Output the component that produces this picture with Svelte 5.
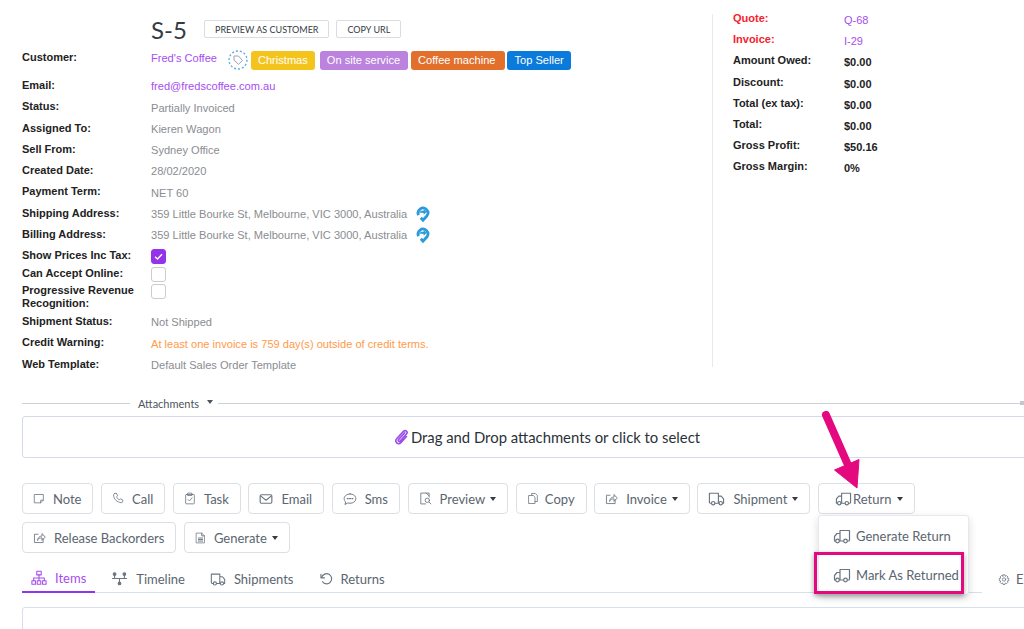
<script>
  const fields = [
    { label: 'Email:', value: 'fred@fredscoffee.com.au', kind: 'link' },
    { label: 'Status:', value: 'Partially Invoiced' },
    { label: 'Assigned To:', value: 'Kieren Wagon' },
    { label: 'Sell From:', value: 'Sydney Office' },
    { label: 'Created Date:', value: '28/02/2020' },
    { label: 'Payment Term:', value: 'NET 60' },
    { label: 'Shipping Address:', value: '359 Little Bourke St, Melbourne, VIC 3000, Australia', map: true },
    { label: 'Billing Address:', value: '359 Little Bourke St, Melbourne, VIC 3000, Australia', map: true }
  ];
  const lower = [
    { label: 'Shipment Status:', value: 'Not Shipped' },
    { label: 'Credit Warning:', value: 'At least one invoice is 759 day(s) outside of credit terms.', kind: 'warn' },
    { label: 'Web Template:', value: 'Default Sales Order Template' }
  ];
  const totals = [
    { label: 'Quote:', value: 'Q-68', kind: 'ref' },
    { label: 'Invoice:', value: 'I-29', kind: 'ref' },
    { label: 'Amount Owed:', value: '$0.00' },
    { label: 'Discount:', value: '$0.00' },
    { label: 'Total (ex tax):', value: '$0.00' },
    { label: 'Total:', value: '$0.00' },
    { label: 'Gross Profit:', value: '$50.16' },
    { label: 'Gross Margin:', value: '0%' }
  ];
  const tags = [
    { name: 'Christmas', color: '#f5c41c' },
    { name: 'On site service', color: '#bb82de' },
    { name: 'Coffee machine', color: '#e36f2d' },
    { name: 'Top Seller', color: '#0b7bdb' }
  ];
  const row1 = [
    { name: 'Note', icon: 'note' },
    { name: 'Call', icon: 'call' },
    { name: 'Task', icon: 'task' },
    { name: 'Email', icon: 'mail' },
    { name: 'Sms', icon: 'sms' },
    { name: 'Preview', icon: 'preview', caret: true },
    { name: 'Copy', icon: 'copy' },
    { name: 'Invoice', icon: 'share', caret: true },
    { name: 'Shipment', icon: 'truck', caret: true }
  ];
  const row2 = [
    { name: 'Release Backorders', icon: 'share' },
    { name: 'Generate', icon: 'doc', caret: true }
  ];
  const tabs = [
    { name: 'Items', icon: 'tree', active: true },
    { name: 'Timeline', icon: 'timeline' },
    { name: 'Shipments', icon: 'truck' },
    { name: 'Returns', icon: 'undo' }
  ];
</script>

{#snippet icon(name)}
  <svg class="ico {name}" viewBox="0 0 18 18" fill="none" stroke="currentColor" stroke-width="1.2" stroke-linejoin="round" stroke-linecap="round">
    {#if name === 'note'}
      <path d="M2.500 3h13v8.500L11.500 15.500H2.500z" /><path d="M15.500 11.500h-4v4" />
    {:else if name === 'call'}
      <path d="M4 1.500l2.500-.5 2 3.800-1.600 1.400c.7 2.300 2.200 4 4.200 4.800l1.400-1.600 3.800 2-.5 2.800c-.2.800-1 1.300-1.800 1.100C7.600 14.600 2.700 10.300 2.300 3.800c-.1-.8.900-2.100 1.700-2.300z" />
    {:else if name === 'task'}
      <rect x="2.500" y="3" width="13" height="14" rx="1" /><rect x="6" y="1" width="6" height="3.500" /><path d="M6 10.500l2.200 2.200L12 8" />
    {:else if name === 'mail'}
      <rect x="1.500" y="3.500" width="15" height="11" rx="1.500" stroke-width="1.500" /><path d="M2 5l7 5.500L16 5" stroke-width="1.500" />
    {:else if name === 'sms'}
      <path d="M9 2.500c4.200 0 7.500 2.600 7.500 6S13.200 14.500 9 14.500c-1 0-2-.2-2.800-.4L2.500 16l1-3.200C2.200 11.700 1.500 10.200 1.500 8.500c0-3.400 3.300-6 7.500-6z" /><path d="M5.500 8.500h1.200M8.500 8.500h1.200M11.500 8.500h1.200" stroke-width="1.600" />
    {:else if name === 'preview'}
      <path d="M14 7V1.500H2.500v15H9" /><path d="M10 1.500L14 5.500" /><circle cx="11.500" cy="11.500" r="3" /><path d="M14 14l2.500 2.500" />
    {:else if name === 'copy'}
      <path d="M7 4V1.500h5.500l3 3V13.500h-3.500" /><path d="M3 4.500h6.500l2.500 2.500v9.500H3z" />
    {:else if name === 'share'}
      <path d="M14 10.500V16H2V4.500h5" /><path d="M6.500 12.500c.3-3.500 2.500-5.500 6-5.500V3.500l4.500 5-4.500 4.500v-3.500c-2.600 0-4.500.8-6 2.500z" />
    {:else if name === 'truck'}
      <path d="M3.600 14H2.500a1 1 0 0 1-1-1V3.500h9.500V14H7.400M11 6.500h3l2.500 3V14h-.9M11 14h.6" /><circle cx="5.500" cy="14" r="1.800" /><circle cx="13.500" cy="14" r="1.800" />
    {:else if name === 'back'}
      <path d="M14.400 14h1.100a1 1 0 0 0 1-1V3.500H7V14h3.600M7 6.500H4l-2.500 3V14h.9M7 14h-.6" /><circle cx="12.500" cy="14" r="1.800" /><circle cx="4.500" cy="14" r="1.800" />
    {:else if name === 'doc'}
      <path d="M2.500 1h8.500l4.500 4.500V17h-13z" /><path d="M11 1v4.500h4.500M5.500 9h7M5.500 11.500h7M5.500 14h7" stroke-width="1.500" />
    {:else if name === 'tree'}
      <rect x="6.500" y="1.500" width="5" height="4" /><rect x="1" y="12" width="4" height="4" /><rect x="7" y="12" width="4" height="4" /><rect x="13" y="12" width="4" height="4" /><path d="M9 5.500V12M3 12V9h12v3" />
    {:else if name === 'timeline'}
      <circle cx="3.500" cy="3.500" r="1.500" fill="currentColor" /><circle cx="14.500" cy="3.500" r="1.500" fill="currentColor" /><circle cx="9" cy="14" r="1.500" fill="currentColor" /><path d="M1 8.500h16M3.500 5v3.500M14.500 5v3.500M9 8.500V12" />
    {:else if name === 'undo'}
      <path d="M3.500 7a6.500 6.500 0 1 1 1 5.500" stroke-width="1.500" /><path d="M2.500 3v4.500H7" stroke-width="1.500" />
    {:else if name === 'gear'}
      <circle cx="9" cy="9" r="2.500" /><path d="M7.500 2h3l.5 2.200 1.900-1 2.100 2.100-1 1.900 2.200.5v3l-2.200.5 1 1.900-2.100 2.100-1.900-1-.5 2.200h-3l-.5-2.200-1.900 1-2.100-2.100 1-1.900L2 10.500v-3l2.200-.5-1-1.900 2.100-2.100 1.900 1z" />
    {/if}
  </svg>
{/snippet}

{#snippet mapPin()}
  <svg class="pin" viewBox="0 0 14 17" fill="none">
    <path d="M2.600 9.200A4.900 4.900 0 1 1 11 9.800L7 14.200 4.800 11.800" stroke="#2a9bd8" stroke-width="2.800" />
    <path d="M3 6.800C4 4.800 5.800 4.400 7.600 4.800V3l3 3-3 2.700V7c-1.700-.5-3.300-.4-4.600-.2z" fill="#2a9bd8" />
  </svg>
{/snippet}

{#snippet toolButton(item)}
  <button class="tool">
    {@render icon(item.icon)}
    <span>{item.name}</span>
    {#if item.caret}<i class="caret"></i>{/if}
  </button>
{/snippet}

<div class="page">
  <section class="top">
    <div class="details">
      <div class="title">
        <h1>S-5</h1>
        <button class="mini">PREVIEW AS CUSTOMER</button>
        <button class="mini">COPY URL</button>
      </div>

      <div class="row customer">
        <div class="lbl">Customer:</div>
        <div class="val link">Fred's Coffee</div>
        <div class="tag-btn">
          <svg viewBox="0 0 20 20" fill="none">
            <circle cx="10" cy="10" r="9" stroke="#5aa9e6" stroke-width="1.300" stroke-dasharray="2 2" />
            <path d="M6 6h4.500l4 4.500-4 3.800L6 10.200z" stroke="#98a3ad" />
          </svg>
        </div>
        <div class="tags">
          {#each tags as tag}
            <span class="tag" style="background:{tag.color}">{tag.name}</span>
          {/each}
        </div>
      </div>

      {#each fields as f}
        <div class="row">
          <div class="lbl">{f.label}</div>
          <div class="val {f.kind ?? ''}">{f.value}</div>
          {#if f.map}{@render mapPin()}{/if}
        </div>
      {/each}

      <div class="row checks first">
        <div class="lbl">Show Prices Inc Tax:</div>
        <div class="box on">
          <svg viewBox="0 0 15 15"><path d="M4 7.800l2.500 2.200L11 5.200" fill="none" stroke="#fff" stroke-width="1.400" /></svg>
        </div>
      </div>
      <div class="row checks">
        <div class="lbl">Can Accept Online:</div>
        <div class="box"></div>
      </div>
      <div class="row checks tall">
        <div class="lbl">Progressive Revenue Recognition:</div>
        <div class="box"></div>
      </div>

      {#each lower as f}
        <div class="row">
          <div class="lbl">{f.label}</div>
          <div class="val {f.kind ?? ''}">{f.value}</div>
        </div>
      {/each}
    </div>

    <aside class="side">
      {#each totals as t}
        <div class="row">
          <div class="lbl {t.kind ?? ''}">{t.label}</div>
          <div class="amt {t.kind ?? ''}">{t.value}</div>
        </div>
      {/each}
    </aside>
  </section>

  <div class="divider">
    <span class="rule short"></span>
    <span class="att">Attachments</span>
    <i class="caret small"></i>
    <span class="rule"></span>
    <span class="knob"></span>
  </div>

  <div class="drop">
    <svg class="clip" viewBox="0 0 16 18" fill="none" stroke="#9b4dea" stroke-width="1.700" stroke-linecap="round">
      <path d="M11.500 4L5 11c-1.200 1.400.2 2.900 1.500 1.800l6.800-7.500c2-2.300-1-5-3.200-2.800L3 10c-3 3.200 1.300 7.800 4.300 4.500l6-6.500" />
    </svg>
    <span>Drag and Drop attachments or click to select</span>
  </div>

  <div class="toolbar">
    {#each row1 as item}
      {@render toolButton(item)}
    {/each}
    <div class="return-wrap">
      <button class="tool return">
        {@render icon('back')}<span>Return</span><i class="caret"></i>
      </button>
      <div class="menu">
        <div class="menu-item">{@render icon('back')}<span>Generate Return</span></div>
        <div class="menu-item">{@render icon('back')}<span>Mark As Returned</span></div>
        <div class="highlight"></div>
      </div>
      <svg class="arrow" viewBox="0 0 50 90">
        <path d="M8 4L30 54" stroke="#e5097f" stroke-width="8" stroke-linecap="round" fill="none" />
        <path d="M39 77L16.500 59 41 48.500z" fill="#e5097f" stroke="#e5097f" stroke-linejoin="round" />
      </svg>
    </div>
    {#each row2 as item}
      {@render toolButton(item)}
    {/each}
  </div>

  <nav class="tabs">
    {#each tabs as tab}
      <div class="tab" class:active={tab.active}>
        {@render icon(tab.icon)}
        <span>{tab.name}</span>
      </div>
    {/each}
    <div class="extra">{@render icon('gear')}<span>E</span></div>
  </nav>

  <div class="panel"></div>
</div>

<style>
  :global(body) {
    margin: 0;
    background: #fff;
    overflow: hidden;
  }
  button {
    font: inherit;
    background: #fff;
    cursor: pointer;
  }
  h1 {
    margin: 0;
    font: 400 24px Lato, sans-serif;
    color: #333b44;
    width: 46px;
  }
  .page {
    width: 1024px;
    height: 629px;
    overflow: hidden;
    box-sizing: border-box;
    padding: 11px 0 0 22px;
    font-family: "Liberation Sans", Arial, sans-serif;
    font-size: 11.080px;
  }
  .top {
    display: flex;
    height: 357px;
  }
  .details {
    width: 690px;
  }
  .title {
    display: flex;
    align-items: center;
    gap: 7px;
    margin-left: 129px;
    height: 36px;
  }
  .mini {
    height: 18px;
    padding: 0 10px;
    border: 1px solid #d9dce0;
    border-radius: 2px;
    font: 400 9px Lato, sans-serif;
    color: #333b44;
  }
  .row {
    display: flex;
    align-items: flex-start;
    height: 21.250px;
  }
  .lbl {
    width: 129px;
    flex: none;
    font-size: 11px;
    font-weight: 700;
    color: #222;
    line-height: 14px;
  }
  .val {
    color: #8a8d91;
    padding-top: 1.400px;
    line-height: 14px;
  }
  .link {
    color: #a64df0;
  }
  .warn {
    color: #ff9a4a;
  }
  .customer {
    height: 28px;
    margin-top: 3px;
  }
  .tag-btn {
    width: 20px;
    height: 20px;
    margin: 0 3px 0 11px;
  }
  .tags {
    display: flex;
    gap: 3px;
    margin-top: 1px;
  }
  .tag {
    padding: 0 7px;
    height: 19px;
    line-height: 19px;
    border-radius: 3px;
    color: #fff;
  }
  .tag:nth-child(2) {
    margin-left: 2px;
    padding-right: 8px;
  }
  .tag:nth-child(3) {
    padding-right: 10px;
  }
  .tag:nth-child(4) {
    margin-left: -1px;
  }
  .pin {
    width: 14px;
    height: 17px;
    margin-left: 9px;
  }
  .checks {
    height: 17.500px;
  }
  .first {
    margin-top: 1px;
  }
  .checks .lbl {
    line-height: 13px;
  }
  .tall {
    height: 30px;
  }
  .box {
    box-sizing: border-box;
    width: 15px;
    height: 15px;
    border: 1px solid #ccc;
    border-radius: 3px;
    background: #fff;
  }
  .box.on {
    background: #9333ea;
    border-color: #9333ea;
  }
  .box.on svg {
    display: block;
    width: 15px;
    height: 15px;
    margin: -1px;
  }
  .side {
    flex: none;
    width: 290px;
    border-left: 1px solid #e9e9e9;
    padding-left: 20px;
    height: 353px;
    margin-top: 3px;
  }
  .side .row {
    height: 21.200px;
  }
  .side .row:first-child {
    margin-top: -3px;
  }
  .side .lbl {
    width: 111px;
  }
  .side .lbl.ref {
    color: #f5222d;
  }
  .amt {
    font-size: 11px;
    font-weight: 700;
    color: #222;
    padding-top: 2px;
    line-height: 14px;
  }
  .amt.ref {
    font-weight: 400;
    color: #a64df0;
  }
  .divider {
    display: flex;
    align-items: center;
    margin-top: 28px;
    height: 14px;
    font: 400 11px Lato, sans-serif;
    color: #4b5560;
  }
  .rule {
    flex: 1;
    height: 1px;
    background: #cfd3d8;
  }
  .rule.short {
    flex: none;
    width: 108px;
    margin-right: 8px;
  }
  .knob {
    width: 4px;
    height: 4px;
    background: #c4c8cd;
  }
  .att {
    margin-right: 8px;
  }
  .caret {
    display: inline-block;
    width: 0;
    height: 0;
    border: 3.500px solid transparent;
    border-top: 4px solid currentColor;
    border-bottom: 0;
  }
  .caret.small {
    margin-right: 5px;
    transform: translateY(-1px);
  }
  .drop {
    display: flex;
    align-items: center;
    justify-content: center;
    gap: 2px;
    box-sizing: border-box;
    width: 1050px;
    height: 42px;
    margin-top: 6px;
    border: 1px solid #d5dbe6;
    border-radius: 3px;
    font: 400 14.850px Lato, sans-serif;
    color: #2b3138;
  }
  .clip {
    width: 15px;
    height: 17px;
  }
  .toolbar {
    display: flex;
    flex-wrap: wrap;
    gap: 8px 7.600px;
    margin-top: 25px;
    width: 1000px;
    font: 400 13px Lato, sans-serif;
  }
  .tool {
    display: flex;
    align-items: center;
    gap: 8px;
    height: 31px;
    padding: 0 11px 0 10px;
    border: 1px solid #dcdfe3;
    border-radius: 4px;
    color: #5a6570;
    white-space: nowrap;
  }
  .ico {
    width: 12px;
    height: 13px;
    flex: none;
    color: #6b7580;
  }
  .ico.copy {
    margin-right: -2px;
  }
  .ico.preview,
  .ico.share {
    width: 13px;
  }
  .ico.mail,
  .ico.sms {
    width: 14px;
    height: 14px;
  }
  .ico.truck,
  .ico.back {
    width: 17px;
    height: 17px;
  }
  .ico.doc {
    width: 11px;
    height: 14px;
  }
  .tool .caret {
    color: #333b44;
    margin-left: -3px;
  }
  .return-wrap {
    position: relative;
  }
  .return {
    gap: 1px;
    padding: 0 11px 0 16px;
  }
  .return .caret {
    margin-left: 5px;
  }
  .menu {
    position: absolute;
    z-index: 2;
    left: 0;
    top: 32px;
    width: 149px;
    background: #fff;
    border: 1px solid #e6e8eb;
    border-radius: 3px;
    box-shadow: 0 3px 9px rgba(0, 0, 0, 0.14);
    color: #5a6570;
  }
  .menu-item {
    display: flex;
    align-items: center;
    gap: 5px;
    height: 39px;
    padding-left: 14px;
    white-space: nowrap;
  }
  .menu-item .ico {
    width: 18px;
    height: 18px;
  }
  .highlight {
    position: absolute;
    left: -5px;
    top: 36px;
    width: 144px;
    height: 36px;
    border: 3px solid #e5097f;
    box-shadow: 0 2px 5px rgba(0, 0, 0, 0.35);
  }
  .arrow {
    position: absolute;
    z-index: 3;
    left: 0;
    top: -72px;
    width: 50px;
    height: 90px;
  }
  .tabs {
    display: flex;
    align-items: center;
    width: 960px;
    height: 32px;
    margin-top: 7px;
    border-bottom: 1px solid #d7e0ea;
    font: 400 13px Lato, sans-serif;
    color: #5a6570;
    position: relative;
  }
  .tab {
    display: flex;
    align-items: center;
    gap: 8px;
    box-sizing: border-box;
    height: 32px;
    padding: 5px 9px 0;
    margin-right: 7px;
  }
  .tab .ico {
    width: 16px;
    height: 16px;
  }
  .tab .ico.timeline {
    width: 17px;
  }
  .tab .ico.undo {
    width: 14px;
  }
  .tab.active {
    color: #a64df0;
    border-bottom: 2px solid #9333ea;
    height: 33px;
    margin-bottom: -1px;
  }
  .tab.active .ico {
    color: #a64df0;
  }
  .extra {
    position: absolute;
    left: 976px;
    top: 11px;
    display: flex;
    align-items: center;
    gap: 6px;
  }
  .panel {
    box-sizing: border-box;
    width: 1050px;
    height: 60px;
    margin-top: 14px;
    border: 1px solid #d7e0ea;
    border-radius: 3px;
  }
</style>
